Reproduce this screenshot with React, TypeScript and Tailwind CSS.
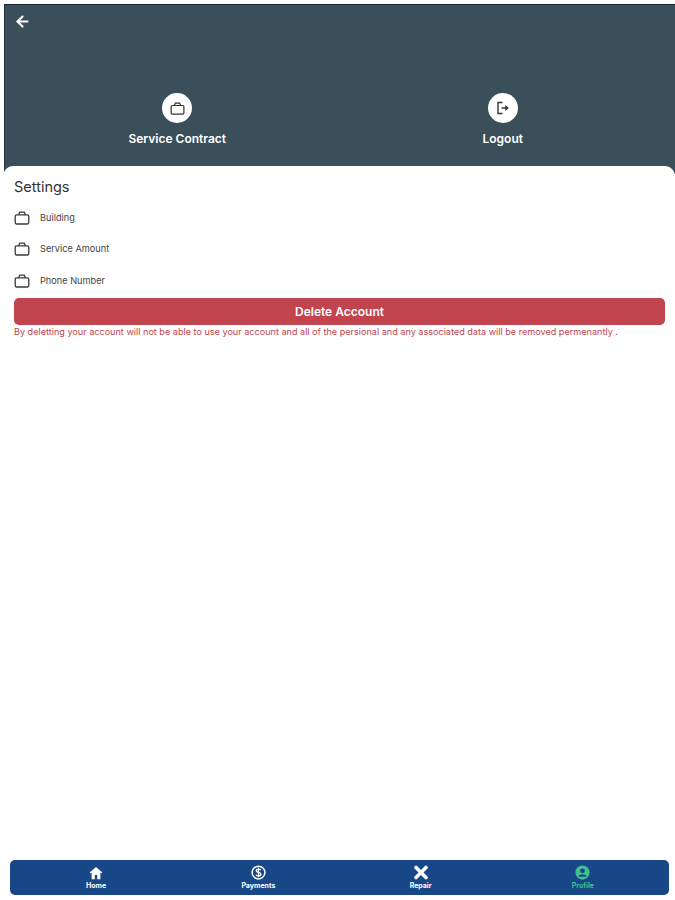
import React from 'react';
import { ArrowLeft } from 'lucide-react';

function BagIcon({ size = 16 }: { size?: number }) {
  return (
    <svg width={size} height={size} viewBox="0 0 16 16" fill="none" stroke="currentColor" strokeWidth="1.3">
      <rect x="1.2" y="4.8" width="13.6" height="9.2" rx="1.4" />
      <path d="M4.6 4.8 5.8 2.2h4.4l1.2 2.6" />
    </svg>
  );
}

function LogoutIcon() {
  return (
    <svg width="16" height="16" viewBox="0 0 16 16" fill="none" stroke="currentColor" strokeWidth="1.4">
      <path d="M7.5 2.5H3v11h4.5" />
      <path d="M6.5 8h6" />
      <path d="M10.5 5.6 13.4 8l-2.9 2.4z" fill="currentColor" strokeWidth="0.6" />
    </svg>
  );
}

function HomeIcon() {
  return (
    <svg width="14" height="14" viewBox="0 0 16 16" fill="currentColor">
      <path d="M8 1 .8 7.4l1 1.1L3 7.5V15h3.6v-3.6a1.4 1.4 0 0 1 2.8 0V15H13V7.5l1.2 1 1-1.1z" />
    </svg>
  );
}

function PaymentsIcon() {
  return (
    <svg width="15" height="15" viewBox="0 0 16 16" fill="none" stroke="currentColor">
      <circle cx="8" cy="8" r="6.8" strokeWidth="1.6" />
      <path
        d="M10.4 5.6C10 4.7 9.1 4.3 8 4.3c-1.4 0-2.4.7-2.4 1.8 0 2.4 4.9 1.3 4.9 3.8 0 1.1-1 1.8-2.5 1.8-1.2 0-2.2-.5-2.6-1.4M8 3v10"
        strokeWidth="1.4"
      />
    </svg>
  );
}

function RepairIcon() {
  return (
    <svg width="16" height="15" viewBox="0 0 16 15" fill="none" stroke="currentColor" strokeLinecap="round">
      <path d="M3 2.5 13 12.5" strokeWidth="3.6" />
      <path d="M13 2.5 3 12.5" strokeWidth="3.6" />
    </svg>
  );
}

function ProfileIcon() {
  return (
    <svg width="15" height="15" viewBox="0 0 16 16">
      <circle cx="8" cy="8" r="7.6" fill="currentColor" />
      <circle cx="8" cy="6.2" r="2.6" fill="#184787" />
      <path d="M3.4 12.4C4.4 10.8 6 10.2 8 10.2s3.6.6 4.6 2.2z" fill="#184787" />
    </svg>
  );
}

function HeaderAction({ label, icon }: { label: string; icon: React.ReactNode }) {
  return (
    <div className="flex flex-1 flex-col items-center">
      <div className="flex h-[30px] w-[30px] items-center justify-center rounded-full bg-white text-[#333]">
        {icon}
      </div>
      <span className="mt-[7px] text-[12px] leading-[18px] font-semibold text-white">{label}</span>
    </div>
  );
}

function SettingRow({ label }: { label: string }) {
  return (
    <div className="flex h-[31.5px] items-center text-[#3a3a3a]">
      <BagIcon />
      <span className="ml-[10px] text-[9.2px] text-[#444]">{label}</span>
    </div>
  );
}

function NavItem({ label, icon, active }: { label: string; icon: React.ReactNode; active?: boolean }) {
  return (
    <div className={`flex flex-1 flex-col items-center ${active ? 'text-[#3fc08c]' : 'text-white'}`}>
      {icon}
      <span className="mt-[1px] text-[7px] leading-[9px] font-bold">{label}</span>
    </div>
  );
}

export default function App() {
  return (
    <div className="flex h-[900px] w-[675px] flex-col overflow-hidden bg-white font-['Inter','Liberation_Sans',sans-serif]">
      <div className="mt-[4px] ml-[4px] h-[170px] shrink-0 border-t border-l border-t-[#0f2a3a] border-l-[#22343f] bg-[#3b4f5a] pt-[8px]">
        <ArrowLeft size={17} strokeWidth={3} className="ml-[9px] text-white" />
        <div className="mt-[63px] flex px-[9.5px]">
          <HeaderAction label="Service Contract" icon={<BagIcon size={15} />} />
          <HeaderAction label="Logout" icon={<LogoutIcon />} />
        </div>
      </div>

      <div className="relative z-10 -mt-[8px] ml-[3px] flex-1 rounded-t-[10px] bg-white px-[11px] pt-[11px]">
        <h1 className="text-[14.5px] leading-[20px] font-normal text-[#333]">Settings</h1>
        <div className="mt-[5px]">
          <SettingRow label="Building" />
          <SettingRow label="Service Amount" />
          <SettingRow label="Phone Number" />
        </div>
        <button
          type="button"
          className="mt-[1px] h-[27px] w-[651px] rounded-[5px] bg-[#c1444e] pt-[1px] text-[12px] font-semibold text-white"
        >
          Delete Account
        </button>
        <p className="text-[9.1px] leading-[13px] whitespace-nowrap text-[#c1444e]">
          By deletting your account will not be able to use your account and all of the persional and any associated data will be removed permenantly .
        </p>
      </div>

      <div className="mr-[6px] mb-[5px] ml-[10px] flex h-[35px] shrink-0 items-center rounded-[5px] bg-[#184787] px-[5px]">
        <NavItem label="Home" icon={<HomeIcon />} />
        <NavItem label="Payments" icon={<PaymentsIcon />} />
        <NavItem label="Repair" icon={<RepairIcon />} />
        <NavItem label="Profile" active icon={<ProfileIcon />} />
      </div>
    </div>
  );
}
